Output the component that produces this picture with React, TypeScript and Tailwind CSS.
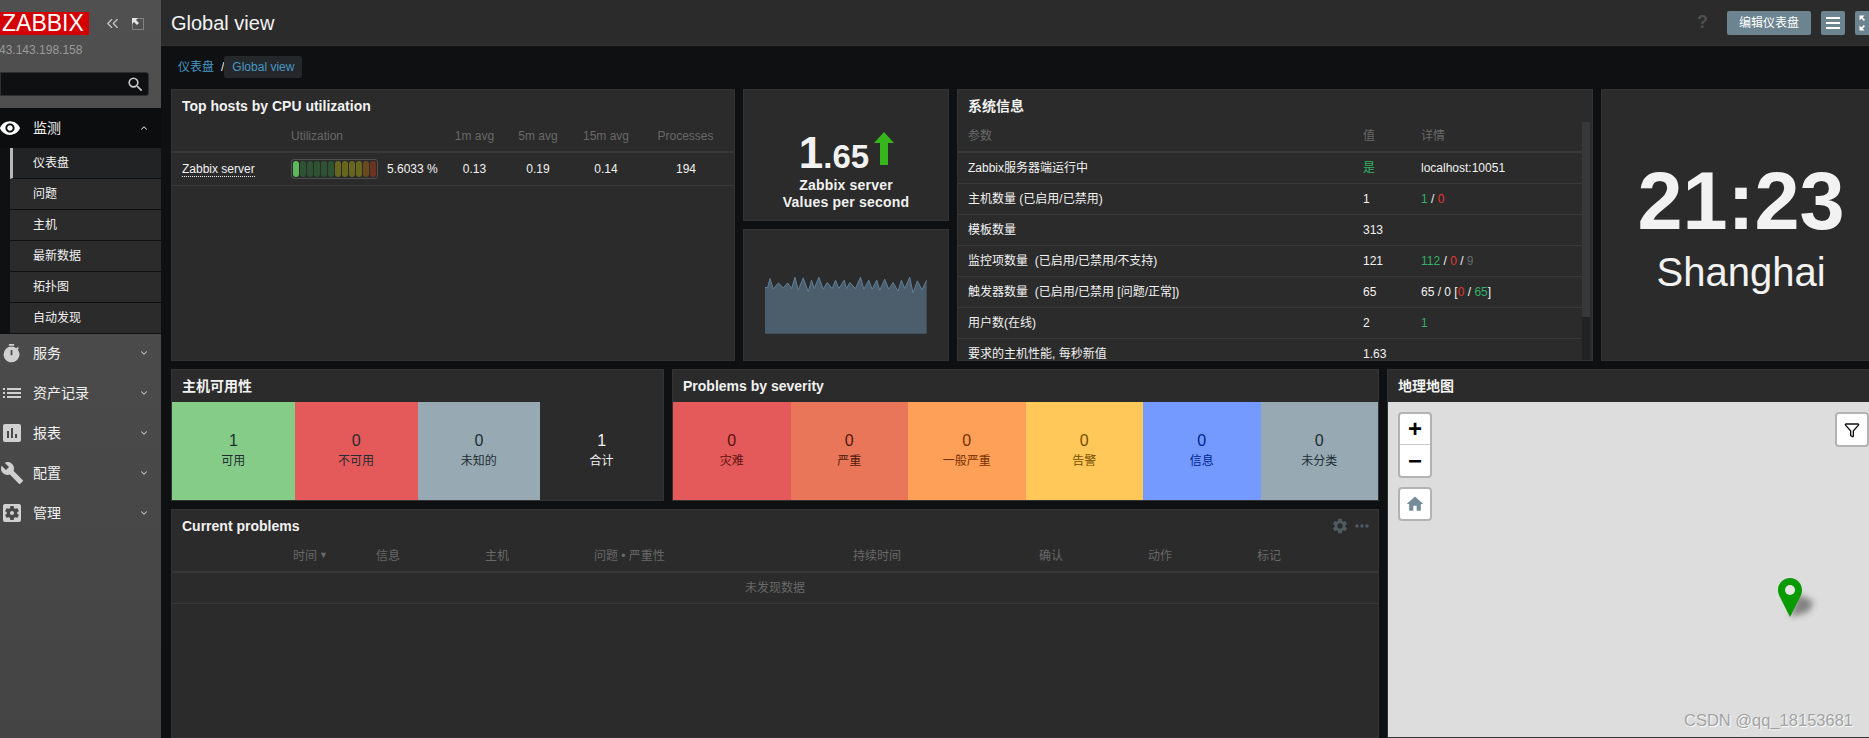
import type { ReactNode } from "react";
import { ChevronDown, ChevronUp, ChevronsLeft, Filter } from "lucide-react";
import {
  MdAssessment,
  MdBuild,
  MdHome,
  MdList,
  MdMoreHoriz,
  MdSearch,
  MdSettings,
  MdSettingsApplications,
  MdTimer,
  MdVisibility,
  MdZoomOutMap,
} from "react-icons/md";

const font = "font-['Liberation_Sans','Noto_Sans_CJK_SC',sans-serif]";

const subItems = ["仪表盘", "问题", "主机", "最新数据", "拓扑图", "自动发现"];

const menuItems = [
  { label: "服务", icon: <MdTimer size={21} /> },
  { label: "资产记录", icon: <MdList size={24} /> },
  { label: "报表", icon: <MdAssessment size={24} /> },
  { label: "配置", icon: <MdBuild size={24} /> },
  { label: "管理", icon: <MdSettingsApplications size={24} /> },
];

const barSegments = [
  "bg-[#5cb85c]",
  "bg-[#2f5233]",
  "bg-[#2f5233]",
  "bg-[#2f5233]",
  "bg-[#2f5233]",
  "bg-[#2f5233]",
  "bg-[#66661f]",
  "bg-[#66661f]",
  "bg-[#66661f]",
  "bg-[#66661f]",
  "bg-[#6b4a1e]",
  "bg-[#6e3320]",
];

const availability = [
  { value: "1", label: "可用", box: "bg-[#86cc89] text-[#1f2c33]" },
  { value: "0", label: "不可用", box: "bg-[#e45959] text-[#1f2c33]" },
  { value: "0", label: "未知的", box: "bg-[#97aab3] text-[#1f2c33]" },
  { value: "1", label: "合计", box: "bg-[#2b2b2b] text-[#f2f2f2]" },
];

const severities = [
  { value: "0", label: "灾难", box: "bg-[#e45959] text-[#5a1212]" },
  { value: "0", label: "严重", box: "bg-[#e97659] text-[#52190b]" },
  { value: "0", label: "一般严重", box: "bg-[#ffa059] text-[#733100]" },
  { value: "0", label: "告警", box: "bg-[#ffc859] text-[#734d00]" },
  { value: "0", label: "信息", box: "bg-[#7499ff] text-[#00268e]" },
  { value: "0", label: "未分类", box: "bg-[#97aab3] text-[#1f2c33]" },
];

const green = "text-[#34af67]";
const red = "text-[#e33734]";

const systemRows: { name: string; value: ReactNode; detail?: ReactNode }[] = [
  { name: "Zabbix服务器端运行中", value: <span className={green}>是</span>, detail: "localhost:10051" },
  {
    name: "主机数量 (已启用/已禁用)",
    value: "1",
    detail: (
      <>
        <span className={green}>1</span> / <span className={red}>0</span>
      </>
    ),
  },
  { name: "模板数量", value: "313" },
  {
    name: "监控项数量  (已启用/已禁用/不支持)",
    value: "121",
    detail: (
      <>
        <span className={green}>112</span> / <span className={red}>0</span> /{" "}
        <span className="text-[#686868]">9</span>
      </>
    ),
  },
  {
    name: "触发器数量  (已启用/已禁用 [问题/正常])",
    value: "65",
    detail: (
      <>
        65 / 0 [<span className={red}>0</span> / <span className={green}>65</span>]
      </>
    ),
  },
  { name: "用户数(在线)", value: "2", detail: <span className={green}>1</span> },
  { name: "要求的主机性能, 每秒新值", value: "1.63" },
];

const sparkPoints =
  "60,587 68,587 75,560 85,592 100,573 115,588 128,573 140,590 150,556 160,595 175,558 190,600 200,565 208,590 222,556 235,592 247,572 262,590 272,565 282,590 298,565 305,590 315,572 332,590 347,556 357,592 372,565 382,592 396,565 405,595 420,562 432,592 445,572 460,598 470,565 480,590 495,556 505,603 518,567 532,594 546,565";

const Panel = ({
  title,
  className,
  action,
  children,
}: {
  title?: string;
  className?: string;
  action?: ReactNode;
  children: ReactNode;
}) => (
  <section className={`shrink-0 bg-[#2b2b2b] border border-[#333333] overflow-hidden flex flex-col ${className ?? ""}`}>
    {title && (
      <header className="h-[32px] shrink-0 px-[10px] flex items-center justify-between text-[14px] font-bold text-[#f2f2f2]">
        <span>{title}</span>
        {action}
      </header>
    )}
    {children}
  </section>
);

const StatCell = ({ value, label, box }: { value: string; label: string; box: string }) => (
  <div className={`flex-1 flex flex-col items-center justify-center ${box}`}>
    <span className="text-[16px] leading-[18px]">{value}</span>
    <span className="mt-[2px] text-[12px] leading-[18px]">{label}</span>
  </div>
);

const Sidebar = () => (
  <aside className="w-[161px] shrink-0 h-full bg-gradient-to-b from-[#505050] to-[#444444] flex flex-col">
    <div className="pt-[12px] flex items-center h-[35px]">
      <div className="w-[89px] h-[23px] bg-[#d40000] text-white text-[23px] leading-[23px] pl-[2px] whitespace-nowrap">
        ZABBIX
      </div>
      <ChevronsLeft size={19} strokeWidth={1.5} className="ml-[14px] text-[#c9c9c9]" />
      <svg width="14" height="14" viewBox="0 0 14 14" className="ml-[9px]">
        <rect x="1.5" y="1.5" width="11" height="11" fill="none" stroke="#b5b5b5" strokeDasharray="1 1" />
        <path d="M1 1h6L5 3l3 3-2 2-3-3-2 2z" fill="#e4e4e4" />
      </svg>
    </div>
    <div className="mt-[8px] -ml-[1px] text-[12px] leading-[14px] text-[#9a9a9a]">43.143.198.158</div>
    <div className="mt-[15px] w-[149px] h-[24px] bg-[#0e1012] border border-[#2f2f2f] rounded-r-[3px] flex items-center justify-end pr-[3px]">
      <MdSearch size={19} className="text-[#c9c9c9]" />
    </div>
    <nav className="mt-[12px]">
      <div className="h-[40px] bg-[#0c0d0e] flex items-center text-[14px] text-[#f2f2f2]">
        <span className="w-[33px] -ml-[1px] shrink-0">
          <MdVisibility size={22} className="text-white" />
        </span>
        <span className="ml-[1px] flex-1">监测</span>
        <ChevronUp size={10} strokeWidth={2.5} className="mr-[12px] text-[#d0d0d0]" />
      </div>
      <ul className="bg-[#0e1012] pl-[10px] -mb-[1px]">
        {subItems.map((item, i) => (
          <li
            key={item}
            className={`h-[31px] flex items-center text-[12px] text-[#f2f2f2] border-b border-[#0e1012] ${
              i === 0 ? "bg-[#222324] border-l-[3px] border-l-[#b8b8b8] pl-[20px]" : "bg-[#2b2b2b] pl-[23px]"
            }`}
          >
            {item}
          </li>
        ))}
      </ul>
      {menuItems.map((item) => (
        <div key={item.label} className="h-[40px] flex items-center text-[14px] text-[#f2f2f2]">
          <span className="w-[33px] -ml-[2px] mr-[2px] shrink-0 flex justify-center text-[#d0d0d0] pr-[6px]">{item.icon}</span>
          <span className="flex-1">{item.label}</span>
          <ChevronDown size={10} strokeWidth={2.5} className="mr-[12px] text-[#c9c9c9]" />
        </div>
      ))}
    </nav>
  </aside>
);

const TopBar = () => (
  <header className="h-[46px] shrink-0 bg-[#2b2b2b] border-b border-[#333333] pl-[10px] flex items-center">
    <h1 className="text-[20px] text-[#f2f2f2] flex-1">Global view</h1>
    <span className="text-[18px] font-bold text-[#4f4f4f] mr-[19px]">?</span>
    <button className="w-[84px] h-[24px] bg-[#6c8390] rounded-[2px] text-[12px] text-white">编辑仪表盘</button>
    <button className="w-[24px] h-[24px] ml-[10px] bg-[#6c8390] rounded-[2px] flex items-center justify-center">
      <svg width="14" height="12" viewBox="0 0 14 12" fill="#ffffff">
        <rect width="14" height="2" />
        <rect y="5" width="14" height="2" />
        <rect y="10" width="14" height="2" />
      </svg>
    </button>
    <button className="w-[24px] h-[24px] ml-[10px] -mr-[10px] bg-[#6c8390] rounded-[2px] flex items-center justify-center text-white shrink-0">
      <MdZoomOutMap size={20} />
    </button>
  </header>
);

const Breadcrumb = () => (
  <div className="h-[43px] shrink-0 pl-[17px] pt-[10px] flex items-start text-[12px] leading-[22px] text-[#4796c4]">
    <span>仪表盘</span>
    <span className="ml-[7px] text-[#f2f2f2]">/</span>
    <span className="px-[8px] h-[22px] bg-[#24282b] rounded-[2px]">Global view</span>
  </div>
);

const TopHosts = () => {
  const grid = "grid grid-cols-[119px_152px_63px_64px_72px_88px] items-center text-[12px]";
  return (
    <Panel title="Top hosts by CPU utilization" className="w-[564px]">
      <div className={`${grid} h-[31px] pb-[2px] text-[#686868] border-b-2 border-[#383838] text-center`}>
        <span />
        <span className="text-left">Utilization</span>
        <span>1m avg</span>
        <span>5m avg</span>
        <span>15m avg</span>
        <span className="pr-[1px]">Processes</span>
      </div>
      <div className={`${grid} h-[33px] text-[#f2f2f2] border-b border-[#383838] text-center`}>
        <span className="text-left pl-[10px]">
          <span className="border-b border-dotted border-[#f2f2f2]">Zabbix server</span>
        </span>
        <div className="flex items-center text-left">
          <div className="w-[87px] h-[20px] border border-[#4f4f4f] rounded-[3px] flex items-center gap-[1px] px-[1px] py-[1px] shrink-0">
            {barSegments.map((color, i) => (
              <span key={i} className={`w-[6px] h-full rounded-[3px] ${color}`} />
            ))}
          </div>
          <span className="ml-[9px] whitespace-nowrap">5.6033 %</span>
        </div>
        <span>0.13</span>
        <span>0.19</span>
        <span>0.14</span>
        <span>194</span>
      </div>
    </Panel>
  );
};

const ValuePanels = () => (
  <div className="w-[206px] shrink-0 flex flex-col gap-2">
    <Panel className="h-[132px] items-center pt-[41px]">
      <div className="flex items-baseline font-bold text-[#f2f2f2] h-[44px] leading-[44px] pl-[1px]">
        <span className="text-[44px]">1</span>
        <span className="text-[33px]">.65</span>
        <svg width="20" height="33" viewBox="0 0 20 33" className="ml-[5px] self-start mt-[1px]">
          <path d="M10 0l10 11h-6v22H6V11H0z" fill="#37b51d" />
        </svg>
      </div>
      <div className="mt-[2px] text-[14px] leading-[17px] tracking-[0.2px] font-bold text-[#f2f2f2] text-center">
        Zabbix server
        <br />
        Values per second
      </div>
    </Panel>
    <Panel className="h-[132px] pl-[21px] pt-[45px]">
      <svg width="162" height="59" viewBox="60 550 487 176">
        <polygon points={`60,726 ${sparkPoints} 546,726`} fill="#4c5d6b" />
        <polyline points={sparkPoints} fill="none" stroke="#5e7f9c" strokeWidth="3" />
      </svg>
    </Panel>
  </div>
);

const SystemInfo = () => {
  const grid = "grid grid-cols-[405px_58px_1fr] items-center text-[12px]";
  return (
    <Panel title="系统信息" className="w-[636px]">
      <div className="flex flex-1 min-h-0 pr-[2px]">
        <div className="flex-1 min-w-0">
          <div className={`${grid} h-[31px] pb-[2px] text-[#686868] border-b-2 border-[#383838]`}>
            <span className="pl-[10px]">参数</span>
            <span>值</span>
            <span>详情</span>
          </div>
          {systemRows.map((row) => (
            <div key={row.name} className={`${grid} h-[31px] text-[#f2f2f2] border-b border-[#383838]`}>
              <span className="pl-[10px] whitespace-pre">{row.name}</span>
              <span>{row.value}</span>
              <span>{row.detail}</span>
            </div>
          ))}
        </div>
        <div className="w-[8px] bg-[#222222]">
          <div className="h-[195px] bg-[#383838]" />
        </div>
      </div>
    </Panel>
  );
};

const Clock = () => (
  <Panel className="w-[280px] items-center pt-[65px]">
    <div className="text-[81px] leading-[92px] font-bold text-[#f2f2f2]">21:23</div>
    <div className="text-[40px] leading-[46px] text-[#f2f2f2] mt-[2px]">Shanghai</div>
  </Panel>
);

const CurrentProblems = () => {
  const heads: [string, string][] = [
    ["时间", "w-[83px]"],
    ["信息", "w-[109px]"],
    ["主机", "w-[109px]"],
    ["问题 • 严重性", "w-[259px]"],
    ["持续时间", "w-[186px]"],
    ["确认", "w-[109px]"],
    ["动作", "w-[109px]"],
    ["标记", "w-[109px]"],
  ];
  return (
    <Panel
      title="Current problems"
      className="flex-1"
      action={
        <span className="flex items-center text-[#4f5a61] -mr-[4px] -mt-[1px]">
          <MdSettings size={18} />
          <MdMoreHoriz size={20} className="ml-[3px]" />
        </span>
      }
    >
      <div className="h-[31px] pb-[2px] pl-[121px] flex items-center text-[12px] text-[#686868] border-b-2 border-[#383838]">
        {heads.map(([label, width], i) => (
          <span key={label} className={`${width} flex items-center shrink-0`}>
            {label}
            {i === 0 && <span className="ml-[2px] text-[9px]">▼</span>}
          </span>
        ))}
      </div>
      <div className="h-[31px] flex items-center justify-center text-[12px] text-[#686868] border-b border-[#383838]">
        未发现数据
      </div>
    </Panel>
  );
};

const MapPanel = () => (
  <Panel title="地理地图" className="w-[490px]">
    <div className="relative flex-1 bg-[#dddddd]">
      <div className="absolute left-[10px] top-[10px] w-[34px] bg-white border-2 border-[#b3b3b3] rounded-[4px] text-black font-bold">
        <div className="h-[31px] flex items-center justify-center text-[24px] leading-none border-b border-[#cccccc]">+</div>
        <div className="h-[31px] flex items-center justify-center text-[24px] leading-none">−</div>
      </div>
      <div className="absolute left-[10px] top-[85px] w-[34px] h-[34px] bg-white border-2 border-[#b3b3b3] rounded-[4px] flex items-center justify-center text-[#768d99]">
        <MdHome size={20} />
      </div>
      <div className="absolute left-[447px] top-[10px] w-[34px] h-[35px] bg-white border-2 border-[#b3b3b3] rounded-[4px] flex items-center justify-center">
        <Filter size={16} strokeWidth={2} className="text-[#111111]" />
      </div>
      <svg width="50" height="44" viewBox="0 0 50 44" className="absolute left-[390px] top-[176px]">
        <defs>
          <filter id="pin-shadow" x="-30%" y="-30%" width="160%" height="160%">
            <feGaussianBlur stdDeviation="3" />
          </filter>
        </defs>
        <path d="M12 39L20 16l16 8-6 10z" fill="#444444" opacity="0.6" filter="url(#pin-shadow)" />
        <path
          d="M12 0C5.4 0 0 5.3 0 12c0 3 1 5.4 2.4 8L12 39l9.6-19c1.4-2.6 2.4-5 2.4-8C24 5.3 18.6 0 12 0z"
          fill="#079b00"
        />
        <circle cx="12" cy="12" r="5" fill="#e6e6e6" />
      </svg>
    </div>
  </Panel>
);

const Watermark = () => (
  <span className="absolute left-[1684px] top-[710px] text-[16.5px] leading-[20px] text-[#a3a3a3] [text-shadow:1px_1px_1px_#ffffff] whitespace-nowrap">
    CSDN @qq_18153681
  </span>
);

export default function App() {
  return (
    <div className={`relative w-[1869px] h-[738px] overflow-hidden flex bg-[#0e1012] ${font}`}>
      <Sidebar />
      <main className="flex-1 min-w-0 flex flex-col">
        <TopBar />
        <Breadcrumb />
        <div className="flex-1 min-h-0 pl-[10px] flex flex-col gap-2">
          <div className="h-[272px] shrink-0 flex gap-2">
            <TopHosts />
            <ValuePanels />
            <SystemInfo />
            <Clock />
          </div>
          <div className="flex-1 min-h-0 flex gap-2">
            <div className="w-[1208px] shrink-0 flex flex-col gap-2">
              <div className="h-[132px] shrink-0 flex gap-2">
                <Panel title="主机可用性" className="w-[493px]">
                  <div className="flex flex-1">
                    {availability.map((cell) => (
                      <StatCell key={cell.label} {...cell} />
                    ))}
                  </div>
                </Panel>
                <Panel title="Problems by severity" className="w-[707px]">
                  <div className="flex flex-1">
                    {severities.map((cell) => (
                      <StatCell key={cell.label} {...cell} />
                    ))}
                  </div>
                </Panel>
              </div>
              <CurrentProblems />
            </div>
            <MapPanel />
          </div>
        </div>
      </main>
      <Watermark />
    </div>
  );
}
